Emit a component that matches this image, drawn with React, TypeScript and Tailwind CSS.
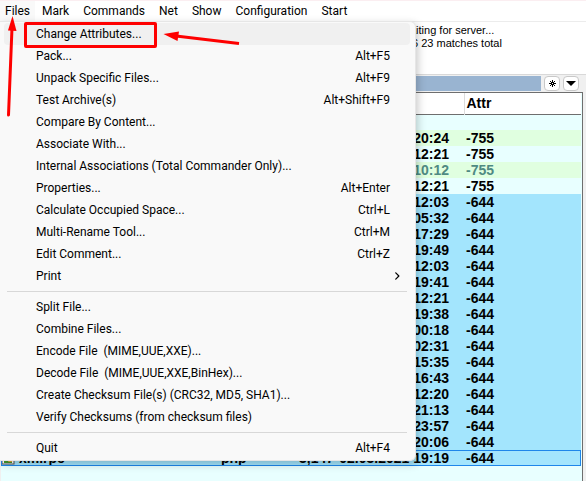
import React from "react";
import { FaAngleRight } from "react-icons/fa6";

type MenuEntry = {
  label: string;
  shortcut?: string;
  submenu?: boolean;
};

type FileRow = {
  name?: string;
  ext?: string;
  size?: string;
  date?: string;
  time: string;
  attr: string;
  style: string;
};

const topMenus = ["Files", "Mark", "Commands", "Net", "Show", "Configuration", "Start"];

const menuGroups: MenuEntry[][] = [
  [
    { label: "Change Attributes..." },
    { label: "Pack...", shortcut: "Alt+F5" },
    { label: "Unpack Specific Files...", shortcut: "Alt+F9" },
    { label: "Test Archive(s)", shortcut: "Alt+Shift+F9" },
    { label: "Compare By Content..." },
    { label: "Associate With..." },
    { label: "Internal Associations (Total Commander Only)..." },
    { label: "Properties...", shortcut: "Alt+Enter" },
    { label: "Calculate Occupied Space...", shortcut: "Ctrl+L" },
    { label: "Multi-Rename Tool...", shortcut: "Ctrl+M" },
    { label: "Edit Comment...", shortcut: "Ctrl+Z" },
    { label: "Print", submenu: true },
  ],
  [
    { label: "Split File..." },
    { label: "Combine Files..." },
    { label: "Encode File  (MIME,UUE,XXE)..." },
    { label: "Decode File  (MIME,UUE,XXE,BinHex)..." },
    { label: "Create Checksum File(s) (CRC32, MD5, SHA1)..." },
    { label: "Verify Checksums (from checksum files)" },
  ],
  [{ label: "Quit", shortcut: "Alt+F4" }],
];

const selected = "bg-[#a3e5fd]";

const rows: FileRow[] = [
  { time: "20:24", attr: "-755", style: "bg-[#e0ffe0]" },
  { time: "12:21", attr: "-755", style: "" },
  { time: "10:12", attr: "-755", style: "bg-[#e0ffe0] text-[#4f8a83]" },
  { time: "12:21", attr: "-755", style: "" },
  ...[
    "12:03", "05:32", "17:29", "19:49", "12:03", "19:41", "12:21", "19:38",
    "00:18", "02:31", "15:35", "16:43", "12:20", "21:13", "23:57", "20:06",
  ].map((time) => ({ time, attr: "-644", style: selected })),
  {
    name: "xmlrpc",
    ext: "php",
    size: "3,147",
    date: "02.03.2021",
    time: "19:19",
    attr: "-644",
    style: "bg-[#a3e5fd] outline outline-1 -outline-offset-1 outline-[#1e86ea]",
  },
];

const MenuBar = () => (
  <nav className="flex h-[21px] border-t border-[#fbeef1] bg-white">
    {topMenus.map((name, index) => (
      <button
        key={name}
        className={index === 0 ? "bg-[#f9f9f9] px-[5px]" : "px-[7px]"}
      >
        {name}
      </button>
    ))}
  </nav>
);

const FilesMenu = () => (
  <div
    role="menu"
    className="absolute left-0 top-[21px] w-[416px] rounded-md rounded-l-none border-r border-y border-[#e6e6e6] bg-[#f9f9f9] py-px shadow-[2px_3px_8px_rgba(0,0,0,0.22)]"
  >
    {menuGroups.map((group, groupIndex) => (
      <div key={groupIndex}>
        {groupIndex > 0 && (
          <div className="ml-[7px] mr-2 py-1">
            <div className="h-px bg-[#d8d8d8]" />
          </div>
        )}
        {group.map((entry, index) => (
          <button
            key={entry.label}
            role="menuitem"
            className={`ml-1 flex h-[22px] w-[406px] items-center justify-between whitespace-pre rounded pl-8 ${
              groupIndex === 0 && index === 0 ? "bg-[#f0f0f0]" : ""
            }`}
          >
            <span>{entry.label}</span>
            {entry.shortcut && <span className="pr-5">{entry.shortcut}</span>}
            {entry.submenu && <FaAngleRight className="mr-2 size-[10px]" />}
          </button>
        ))}
      </div>
    ))}
  </div>
);

const FileTable = () => (
  <table className="w-full table-fixed border-collapse font-['Liberation_Sans',sans-serif] text-[14px] font-bold leading-4">
    <colgroup>
      <col className="w-[218px]" />
      <col className="w-[40px]" />
      <col className="w-[75px]" />
      <col className="w-[130px]" />
      <col />
    </colgroup>
    <thead>
      <tr className="h-[21px] border-b border-[#6e6e6e] bg-white text-left">
        <th />
        <th />
        <th />
        <th className="border-r border-[#dcdcdc]" />
        <th className="p-0 pl-[2px]">Attr</th>
      </tr>
    </thead>
    <tbody>
      <tr className="h-4">
        <td colSpan={5} />
      </tr>
      {rows.map((row, index) => (
        <tr key={index} className={`h-4 ${row.style}`}>
          <td className="p-0">
            {row.name && (
              <span className="flex items-center gap-1">
                <svg viewBox="0 0 14 14" className="size-[14px]">
                  <rect x="1" y="1" width="12" height="12" fill="#fff" stroke="#555" />
                  <rect x="3" y="3" width="8" height="9" fill="#3f9a2d" />
                  <path d="M8 9h3v2H7z" fill="#e2a33b" />
                </svg>
                {row.name}
              </span>
            )}
          </td>
          <td className="p-0 pl-[2px]">{row.ext}</td>
          <td className="p-0 text-right">{row.size}</td>
          <td className="p-0 pr-[15px] text-right">
            {row.date} {row.time}
          </td>
          <td className="p-0 pl-[2px]">{row.attr}</td>
        </tr>
      ))}
    </tbody>
  </table>
);

const Annotations = () => (
  <>
    <div className="absolute left-6 top-[22px] h-[26px] w-[133px] rounded-[2px] border-3 border-[#fe0000]" />
    <svg
      className="pointer-events-none absolute left-0 top-0"
      width="250"
      height="130"
      fill="#fe0000"
      stroke="#fe0000"
    >
      <path d="M8.500 115 12 28" strokeWidth="3" strokeLinecap="round" />
      <path d="M12.500 16 16.500 31 8 30.500z" stroke="none" />
      <path d="M239 43.500 176 36" strokeWidth="3" />
      <path d="M163.500 34 179 31.500 177.500 41z" stroke="none" />
    </svg>
  </>
);

const App: React.FC = () => {
  return (
    <div className="relative flex min-h-screen flex-col overflow-hidden bg-[#f0f0f0] font-[Roboto,'Open_Sans',sans-serif] text-[12px] text-black">
      <MenuBar />
      <div className="h-[54px] border-b border-t border-b-[#d9d9d9] border-t-[#ececec] bg-white pl-[400px] pt-[2px] font-['Liberation_Sans',sans-serif] text-[11px] leading-[13px]">
        <p>Waiting for server...</p>
        <p className="pl-3">6 23 matches total</p>
      </div>
      <div className="flex h-[17px] items-center gap-[3px] pr-[7px]">
        <div className="h-[15px] flex-1 bg-[#99b4d1]" />
        <button
          aria-label="Favourites"
          className="flex h-[15px] w-4 items-center justify-center rounded border border-[#c8c8c8] bg-white"
        >
          <svg viewBox="0 0 7 7" className="size-[7px]" stroke="#000" fill="none">
            <path d="M3.500 0v7M0 3.500h7M1 1l5 5M6 1 1 6" />
            <rect x="3" y="3" width="1" height="1" fill="#fff" stroke="none" />
          </svg>
        </button>
        <button
          aria-label="History"
          className="flex h-[15px] w-4 items-center justify-center rounded border border-[#c8c8c8] bg-white"
        >
          <svg viewBox="0 0 10 5" className="h-[5px] w-[10px] shrink-0">
            <path d="M0 0h10L5 5z" />
          </svg>
        </button>
      </div>
      <div className="ml-px mr-[3px] flex-1 border-r border-t border-[#6e6e6e] bg-[#e8ffff] pr-px">
        <FileTable />
      </div>
      <FilesMenu />
      <Annotations />
    </div>
  );
};

export default App;
